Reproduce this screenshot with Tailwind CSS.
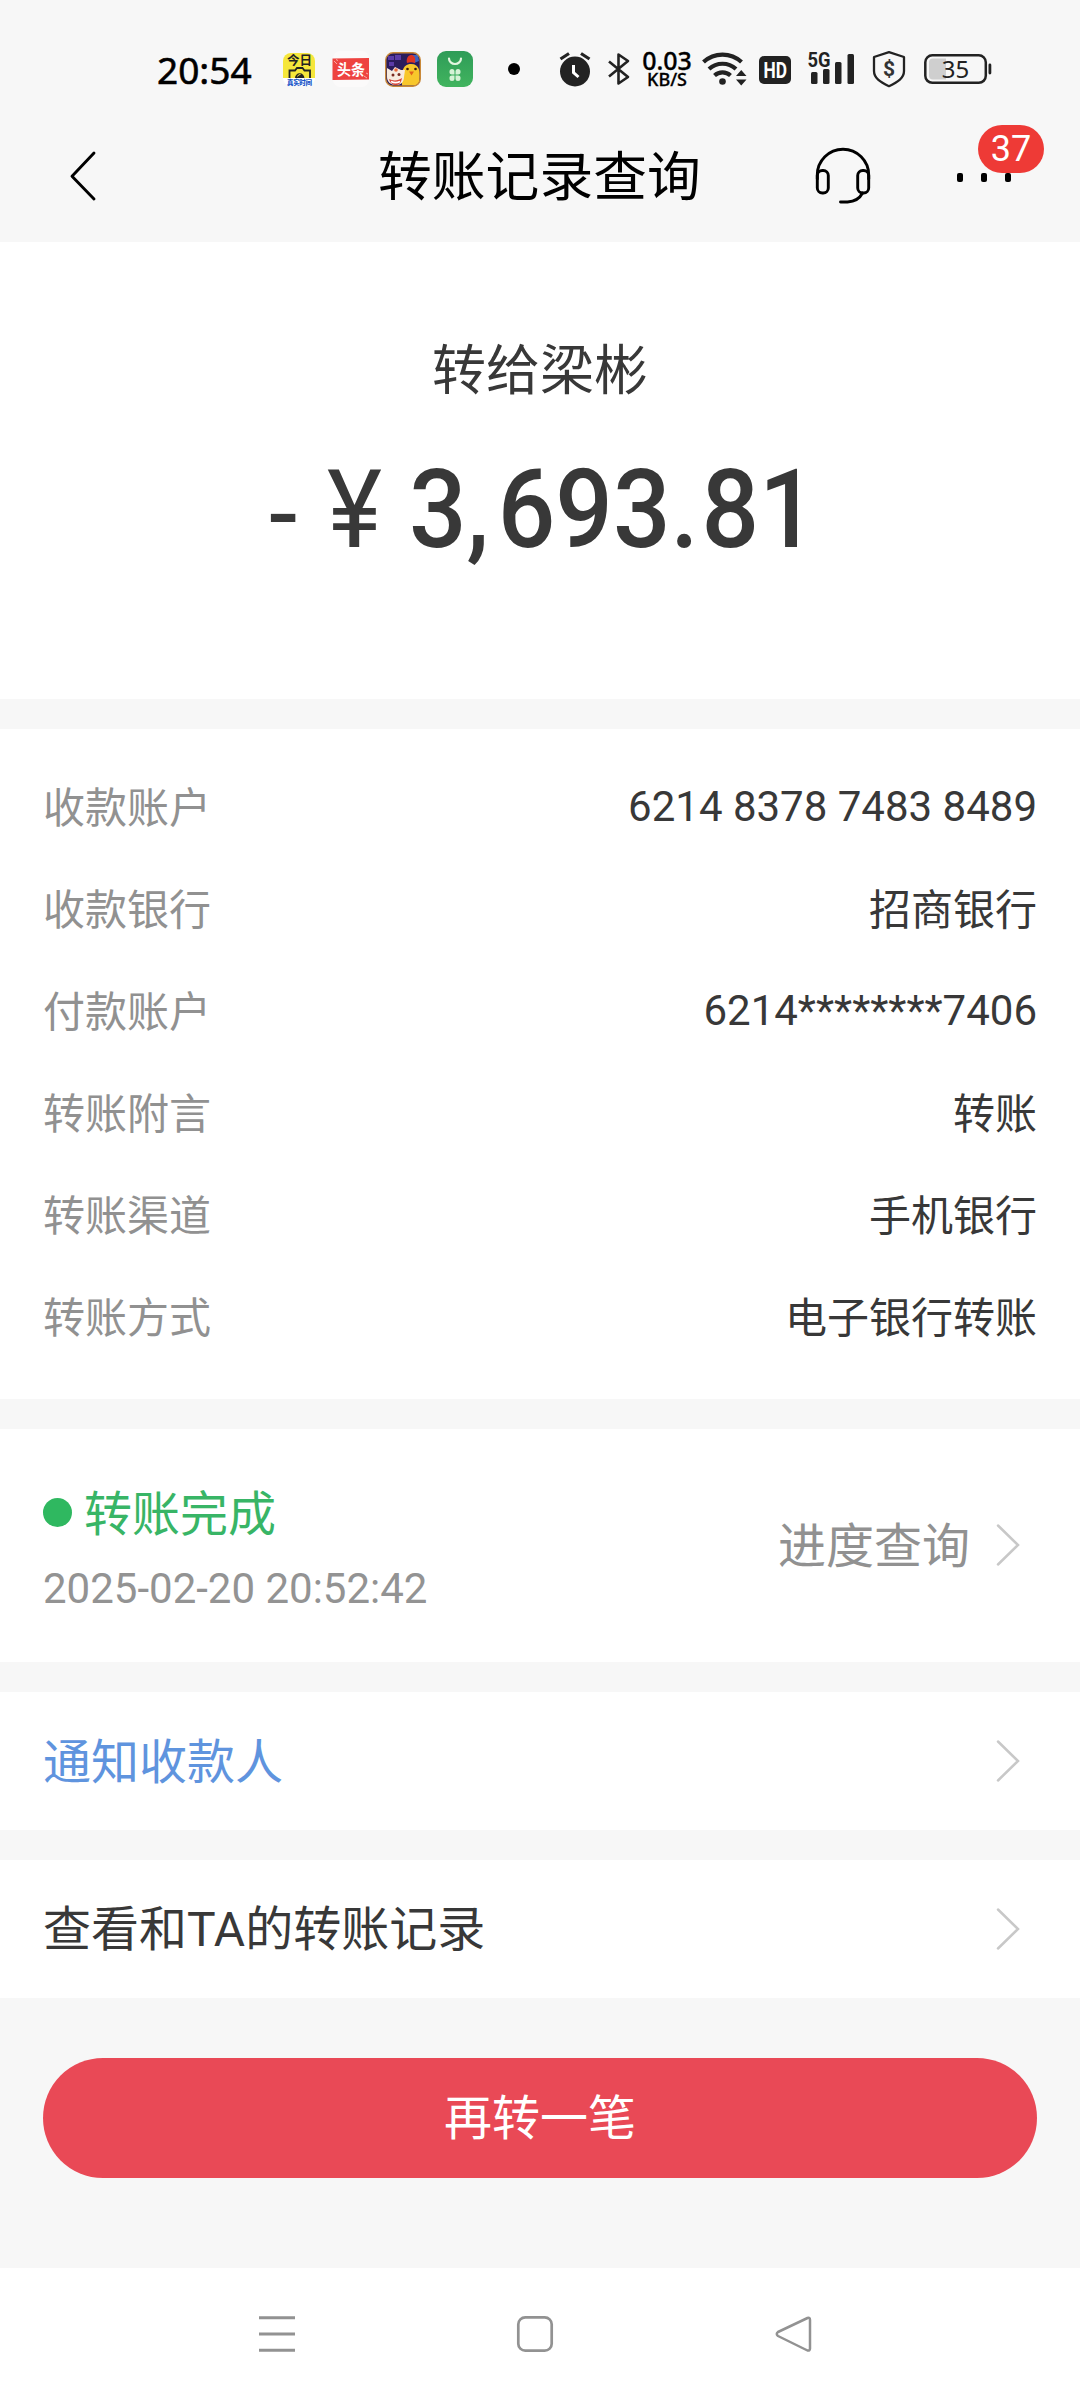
<!DOCTYPE html>
<html lang="zh-CN">
<head>
<meta charset="utf-8">
<title>转账记录查询</title>
<script src="https://cdn.jsdelivr.net/npm/@tailwindcss/browser@4"></script>
</head>
<body class="w-[1080px] h-[2400px] bg-[#f7f7f7] flex flex-col overflow-hidden font-['Noto_Sans_CJK_SC',sans-serif] text-[#383838]">

  <!-- Status bar -->
  <div class="h-[110px] shrink-0 flex items-start pt-[50px] pl-[157px] text-black">
    <div class="w-[126px] h-[38px] leading-[40px] text-[37px] [-webkit-text-stroke:0.6px_#000] font-['Noto_Sans',sans-serif] whitespace-nowrap">20:54</div>

    <svg class="w-[32px] h-[38px] shrink-0 overflow-visible" viewBox="0 0 32 38">
      <rect y="3" width="32" height="33" rx="8" fill="#fff"/>
      <path d="M0 28V11a8 8 0 0 1 8-8h16a8 8 0 0 1 8 8v17z" fill="#f5e63b"/>
      <text x="4" y="15" font-size="12.500" font-weight="700" textLength="25" fill="#222">今日</text>
      <path d="M6.500 28v-7.500H12l2-2.500h5.500l2 2.500h5.500V28" fill="none" stroke="#222" stroke-width="1.800"/>
      <path d="M12 28a4.700 4.700 0 0 1 9.400 0z" fill="#222"/>
      <path d="M14.500 26.500a3 3 0 0 1 3-2" fill="none" stroke="#f5e63b" stroke-width="1"/>
      <text x="4" y="34.500" font-size="6.500" font-weight="900" textLength="25" fill="#1653c8">真实时间</text>
    </svg>

    <svg class="ml-[17px] w-[38px] h-[38px] shrink-0" viewBox="0 0 38 38">
      <rect x="1" y="1" width="36" height="36" rx="7" fill="#fbfafa"/>
      <path d="M0.500 8.500L37 8v21.500L.500 30z" fill="#ee4340"/>
      <path d="M2 11l3 3M4 9.500l2 1M32 26l3 2M34 23l2 1" stroke="#f9aaa5" stroke-width="1"/>
      <text x="5" y="24.800" font-size="15" font-weight="700" textLength="28" lengthAdjust="spacingAndGlyphs" fill="#fff">头条</text>
    </svg>

    <svg class="ml-[15px] w-[37px] h-[38px] shrink-0" viewBox="0 0 37 38">
      <rect x=".7" y="2.700" width="34.600" height="33.600" rx="7.500" fill="#2b1c5c"/>
      <path d="M3 6h6v4H3zM10 5h6v5h-6zM4 12h5v4H4z" fill="#5b3ba8"/>
      <path d="M27 5h6l1 6-5 2z" fill="#3d62c0"/>
      <path d="M17 34c-1-10 0-20 9-20s9 8 8.500 16c-.5 4-3 5.500-6 5.500H17z" fill="#f8c72b"/>
      <path d="M22 13c-1-4 1-8 4-8s5 2 4 8c-3-1-5-1-8 0z" fill="#dd3324"/>
      <circle cx="22.500" cy="19" r="1.300" fill="#3b1d0c"/><circle cx="30.500" cy="19" r="1.300" fill="#3b1d0c"/>
      <path d="M24 21.500h5l-2.500 4z" fill="#e2621b"/>
      <path d="M2 18l5 3 3-4 6 3 4 0-1 7c0 5-3 8-8 8s-9-3-9-8z" fill="#f7ebdf"/>
      <path d="M4 29c4 2 9 2 13-1-1 5-3 7-6 7s-6-2-7-6z" fill="#d9473a"/>
      <path d="M6 31.500c3 1.500 6 1.500 9 0" stroke="#fff" stroke-width="1.500" fill="none"/>
      <circle cx="8" cy="25" r="1.500" fill="#7a2a20"/><circle cx="14" cy="24.500" r="1.500" fill="#7a2a20"/>
      <circle cx="11" cy="20" r="1.800" fill="#e8683a"/>
      <rect x=".7" y="2.700" width="34.600" height="33.600" rx="7.500" fill="none" stroke="#c9893a" stroke-width="1.400"/>
    </svg>

    <svg class="ml-[15px] w-[36px] h-[38px] shrink-0" viewBox="0 0 36 38">
      <defs><linearGradient id="market" x2="0" y2="1"><stop stop-color="#2f9c58"/><stop offset="1" stop-color="#41b45e"/></linearGradient></defs>
      <rect y="1" width="36" height="36" rx="9" fill="url(#market)"/>
      <path d="M12 8.500a6 5.500 0 0 0 12 0" fill="none" stroke="#e2f6df" stroke-width="2.200" stroke-linecap="round"/>
      <g fill="#d6f2d6"><path d="M12.500 21.500a2.500 2.500 0 0 1 5 0v3h-2.500a2.700 2.700 0 0 1-2.500-3zM23.500 21.500a2.500 2.500 0 0 0-5 0v3H21a2.700 2.700 0 0 0 2.500-3zM12.500 28.500a2.500 2.500 0 0 0 5 0v-3H15a2.700 2.700 0 0 0-2.500 3zM23.500 28.500a2.500 2.500 0 0 1-5 0v-3H21a2.700 2.700 0 0 1 2.500 3z"/></g>
    </svg>

    <div class="ml-[35px] mt-[13px] size-3 rounded-full bg-black shrink-0"></div>

    <svg class="ml-[38px] w-[33px] h-[38px] shrink-0" viewBox="0 0 33 38">
      <circle cx="17" cy="21.500" r="15" fill="#222"/>
      <path d="M2.500 9L11 3.500M31.500 9L23 3.500" stroke="#222" stroke-width="3.200"/>
      <path d="M15.500 15v7.500l5 4.500" fill="none" stroke="#fff" stroke-width="3"/>
    </svg>

    <svg class="ml-[17px] w-[22px] h-[38px] shrink-0" viewBox="0 0 22 38">
      <path d="M1 11.500L20 27 10.500 33.500v-29L20 11 1 26.500" fill="none" stroke="#222" stroke-width="2.600" stroke-linejoin="round"/>
    </svg>

    <div class="ml-[9px] w-[56px] shrink-0 flex flex-col items-center font-['Noto_Sans',sans-serif] font-medium whitespace-nowrap">
      <span class="h-[21px] leading-[21px] text-[25px] [-webkit-text-stroke:0.3px_#000]">0.03</span>
      <span class="h-[17px] leading-[17px] text-[18px] [-webkit-text-stroke:0.3px_#000]">KB/S</span>
    </div>

    <svg class="ml-[7px] w-[45px] h-[38px] shrink-0" viewBox="0 0 45 38">
      <g fill="none" stroke="#222" stroke-width="4.200">
        <path d="M1.500 12a28 28 0 0 1 38 0"/>
        <path d="M7 19a20 20 0 0 1 27 0"/>
        <path d="M12.500 25.500a12 12 0 0 1 16 0"/>
      </g>
      <circle cx="20.500" cy="31.500" r="3.300" fill="#222"/>
      <path d="M34 26h10.500l-5.250-6zM34 29.500h10.500l-5.250 6z" fill="#222"/>
    </svg>

    <svg class="ml-[12px] mt-[6px] w-[32px] h-[28px] shrink-0" viewBox="0 0 32 28">
      <rect width="32" height="28" rx="5" fill="#222"/>
      <text x="4.500" y="21.800" font-size="22" font-weight="700" textLength="23.500" lengthAdjust="spacingAndGlyphs" fill="#fff" font-family="Roboto">HD</text>
    </svg>

    <svg class="ml-[16px] w-[48px] h-[38px] shrink-0 overflow-visible" viewBox="0 0 48 38">
      <text x="0.500" y="16.800" font-size="20.500" font-weight="700" textLength="23" lengthAdjust="spacingAndGlyphs" fill="#222" font-family="Roboto">5G</text>
      <g fill="#222"><rect x="4" y="22" width="6.500" height="12" rx="1.500"/><rect x="16" y="19" width="6.500" height="15" rx="1.500"/><rect x="28" y="12" width="6.500" height="22" rx="1.500"/><rect x="40.500" y="4" width="6.500" height="30" rx="1.500"/></g>
    </svg>

    <svg class="ml-[17px] w-[34px] h-[38px] shrink-0" viewBox="0 0 34 38">
      <path d="M17 2.200L32 7v14c0 7-6 11-15 15.200C8 32 2 28 2 21V7z" fill="none" stroke="#222" stroke-width="2.300" stroke-linejoin="round"/>
      <text x="17" y="26" font-size="21" font-weight="700" text-anchor="middle" fill="#333" font-family="Roboto">$</text>
    </svg>

    <svg class="ml-[18px] w-[68px] h-[38px] shrink-0" viewBox="0 0 68 38">
      <rect x="1.300" y="5.300" width="60.500" height="27.500" rx="7" fill="none" stroke="#222" stroke-width="2.500"/>
      <path d="M22 8.500H9a4 4 0 0 0-4 4v13a4 4 0 0 0 4 4h13z" fill="#cfcfcf"/>
      <rect x="64.500" y="13.500" width="2.800" height="11" rx="1.400" fill="#222"/>
      <text x="31.500" y="28" font-size="24" text-anchor="middle" fill="#222" font-family="Noto Sans">35</text>
    </svg>
  </div>

  <!-- Title bar -->
  <div class="h-[132px] shrink-0 flex items-center">
    <svg class="ml-[68px] w-[30px] h-[52px] shrink-0" viewBox="0 0 30 52"><path d="M26 3L4 26.300 26 49" fill="none" stroke="#000" stroke-width="2.900" stroke-linecap="round" stroke-linejoin="round"/></svg>
    <h1 class="ml-[280px] w-[324px] -mt-1.5 text-[53.8px] leading-[72px] text-black whitespace-nowrap">转账记录查询</h1>
    <svg class="ml-[112px] w-[58px] h-[58px] shrink-0" viewBox="0 0 58 58">
      <g fill="none" stroke="#000" stroke-width="2.900" stroke-linecap="round">
        <path d="M3.300 32v-4a25.700 25.700 0 0 1 51.400 0v4"/>
        <rect x="3.300" y="23.500" width="11" height="22.500" rx="5"/>
        <rect x="43.700" y="23.500" width="11" height="22.500" rx="5"/>
        <path d="M48.500 46c-3 6-8 8.500-15 9h-7"/>
      </g>
    </svg>
    <div class="relative ml-[85px] w-[54px] h-[9px] flex justify-between mt-[2px]">
      <i class="w-[6px] h-[9px] rounded-[2px] bg-black"></i>
      <i class="w-[6px] h-[9px] rounded-[2px] bg-black"></i>
      <i class="w-[6px] h-[9px] rounded-[2px] bg-black"></i>
      <span class="absolute left-[21px] -top-[48px] w-[66px] h-[48px] rounded-full bg-[#ee3a36] text-white text-[36px] leading-[48px] text-center font-['Roboto',sans-serif]">37</span>
    </div>
  </div>

  <!-- Amount -->
  <section class="h-[457px] shrink-0 bg-white flex flex-col items-center pt-[90px]">
    <p class="text-[54px] leading-[70px]">转给梁彬</p>
    <div class="mt-[48px] w-[1080px] h-[120px] flex items-center pl-[269px] leading-[120px] text-[109px] font-['Roboto',sans-serif] font-medium whitespace-nowrap">
      <span class="w-[58px] font-normal pt-[8px] origin-left scale-x-[0.94]">-</span>
      <span class="w-[82px] font-normal origin-left scale-x-[0.96]">¥</span>
      <span class="origin-left scale-x-[0.93]">3<span class="tracking-[9px]">,</span>693<span class="tracking-[3px]">.</span>81</span>
    </div>
  </section>

  <!-- Details -->
  <section class="mt-[30px] h-[670px] shrink-0 bg-white px-[43px] pt-[25px] text-[42px] leading-[102px]">
    <div class="flex justify-between h-[102px]"><span class="text-[#919191]">收款账户</span><span class="pt-[2px] font-['Roboto',sans-serif]">6214 8378 7483 8489</span></div>
    <div class="flex justify-between h-[102px]"><span class="text-[#919191]">收款银行</span><span>招商银行</span></div>
    <div class="flex justify-between h-[102px]"><span class="text-[#919191]">付款账户</span><span class="pt-[2px] font-['Roboto',sans-serif]">6214********7406</span></div>
    <div class="flex justify-between h-[102px]"><span class="text-[#919191]">转账附言</span><span>转账</span></div>
    <div class="flex justify-between h-[102px]"><span class="text-[#919191]">转账渠道</span><span>手机银行</span></div>
    <div class="flex justify-between h-[102px]"><span class="text-[#919191]">转账方式</span><span>电子银行转账</span></div>
  </section>

  <!-- Progress -->
  <section class="mt-[30px] h-[233px] shrink-0 bg-white pl-[43px] pr-[60px] flex items-center justify-between">
    <div class="flex flex-col pt-[4px]">
      <div class="flex items-center h-[72px] text-[48px] leading-[72px] text-[#38b566]"><i class="mr-[12px] size-[29px] rounded-full bg-[#2fb860]"></i><span class="-mt-1.5">转账完成</span></div>
      <span class="mt-[10px] text-[42px] leading-[60px] text-[#939393] font-['Roboto',sans-serif]">2025-02-20 20:52:42</span>
    </div>
    <div class="flex items-center text-[48px] leading-[72px] text-[#919191]">
      <span class="-mt-2 mr-[26px]">进度查询</span>
      <svg class="-mt-[2px] w-[24px] h-[44px]" viewBox="0 0 24 44"><path d="M2 2.500L22 22 2 41.500" fill="none" stroke="#c8c8c8" stroke-width="2.500" stroke-linecap="round"/></svg>
    </div>
  </section>

  <!-- Links -->
  <section class="mt-[30px] h-[138px] shrink-0 bg-white pl-[43px] pr-[60px] flex items-center justify-between text-[48px] leading-[72px] text-[#5f94de]">
    <span class="-mt-1.5">通知收款人</span>
    <svg class="w-[24px] h-[44px]" viewBox="0 0 24 44"><path d="M2 2.500L22 22 2 41.500" fill="none" stroke="#c8c8c8" stroke-width="2.500" stroke-linecap="round"/></svg>
  </section>
  <section class="mt-[30px] h-[138px] shrink-0 bg-white pl-[43px] pr-[60px] flex items-center justify-between text-[48px] leading-[72px]">
    <span class="-mt-1">查看和<span class="font-['Roboto',sans-serif]">TA</span>的转账记录</span>
    <svg class="w-[24px] h-[44px]" viewBox="0 0 24 44"><path d="M2 2.500L22 22 2 41.500" fill="none" stroke="#c8c8c8" stroke-width="2.500" stroke-linecap="round"/></svg>
  </section>

  <button class="mt-[60px] mx-[43px] h-[120px] shrink-0 rounded-full bg-[#e94956] text-white text-[48px] leading-[112px] pb-[8px]">再转一笔</button>

  <!-- System navigation -->
  <nav class="mt-auto h-[132px] shrink-0 bg-white flex items-start pt-[46px] pl-[257px]">
    <svg class="size-[40px]" viewBox="0 0 40 40"><path d="M2 3.800h36M2 20h36M2 36.200h36" stroke="#929292" stroke-width="3"/></svg>
    <svg class="ml-[218px] size-[40px]" viewBox="0 0 40 40"><rect x="3.300" y="3.300" width="33.400" height="33.400" rx="7" fill="none" stroke="#929292" stroke-width="2.700"/></svg>
    <svg class="ml-[219px] size-[40px]" viewBox="0 0 40 40"><path d="M33.500 4L4 18q-2.500 2 0 4l29.500 14.500q2.500.5 2.500-2V6q0-3-2.500-2z" fill="none" stroke="#929292" stroke-width="2.500" stroke-linejoin="round"/></svg>
  </nav>
</body>
</html>
